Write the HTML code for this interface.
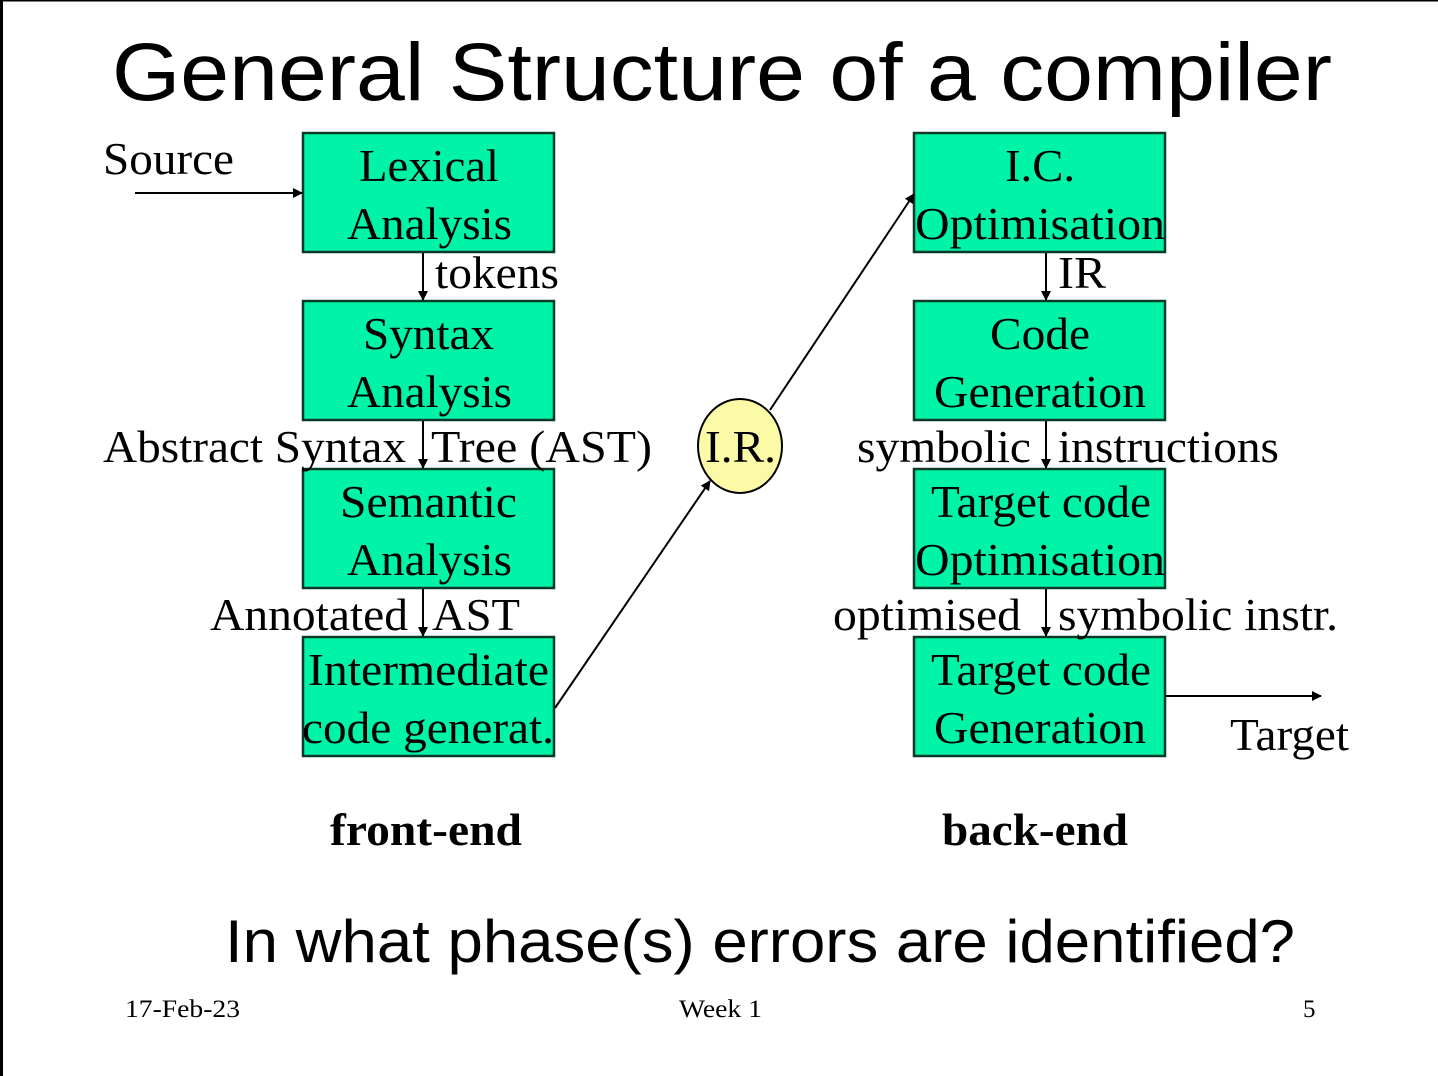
<!DOCTYPE html>
<html><head><meta charset="utf-8"><style>
html,body{margin:0;padding:0;background:#fff;}
svg{display:block;}
.s{font-family:"Liberation Serif",serif;font-size:46px;fill:#000;}
.a{font-family:"Liberation Sans",sans-serif;fill:#000;}
.b{fill:#00F4A8;stroke:#0b3a2a;stroke-width:2.5;}
</style></head><body>
<svg width="1438" height="1076" viewBox="0 0 1438 1076" xmlns="http://www.w3.org/2000/svg">
<defs><marker id="m" markerWidth="10" markerHeight="10" refX="9" refY="5" orient="auto" markerUnits="userSpaceOnUse"><path d="M0,0 L10,5 L0,10 z" fill="#000"/></marker></defs>
<rect x="0" y="0" width="1438" height="1076" fill="#fff"/>
<rect x="0" y="0" width="3" height="1076" fill="#000"/>
<rect x="0" y="0" width="1438" height="1.5" fill="#000"/>
<text class="a" x="112" y="100" font-size="82" textLength="1220" lengthAdjust="spacingAndGlyphs">General Structure of a compiler</text>

<g class="b">
<rect x="303" y="133" width="251" height="119"/>
<rect x="303" y="301" width="251" height="119"/>
<rect x="303" y="469" width="251" height="119"/>
<rect x="303" y="637" width="251" height="119"/>
<rect x="914" y="133" width="251" height="119"/>
<rect x="914" y="301" width="251" height="119"/>
<rect x="914" y="469" width="251" height="119"/>
<rect x="914" y="637" width="251" height="119"/>
</g>
<g class="s" lengthAdjust="spacingAndGlyphs">
<text x="359" y="181" textLength="140" lengthAdjust="spacingAndGlyphs">Lexical</text>
<text x="347" y="239" textLength="165" lengthAdjust="spacingAndGlyphs">Analysis</text>
<text x="363" y="349" textLength="131" lengthAdjust="spacingAndGlyphs">Syntax</text>
<text x="347" y="407" textLength="165" lengthAdjust="spacingAndGlyphs">Analysis</text>
<text x="340" y="517" textLength="177" lengthAdjust="spacingAndGlyphs">Semantic</text>
<text x="347" y="575" textLength="165" lengthAdjust="spacingAndGlyphs">Analysis</text>
<text x="308" y="685" textLength="241" lengthAdjust="spacingAndGlyphs">Intermediate</text>
<text x="302" y="743" textLength="252" lengthAdjust="spacingAndGlyphs">code generat.</text>
<text x="1005" y="181" textLength="70" lengthAdjust="spacingAndGlyphs">I.C.</text>
<text x="915" y="239" textLength="250" lengthAdjust="spacingAndGlyphs">Optimisation</text>
<text x="990" y="349" textLength="100" lengthAdjust="spacingAndGlyphs">Code</text>
<text x="934" y="407" textLength="212" lengthAdjust="spacingAndGlyphs">Generation</text>
<text x="931" y="517" textLength="220" lengthAdjust="spacingAndGlyphs">Target code</text>
<text x="915" y="575" textLength="250" lengthAdjust="spacingAndGlyphs">Optimisation</text>
<text x="931" y="685" textLength="220" lengthAdjust="spacingAndGlyphs">Target code</text>
<text x="934" y="743" textLength="212" lengthAdjust="spacingAndGlyphs">Generation</text>
</g>
<g stroke="#000" stroke-width="2" marker-end="url(#m)">
<line x1="135" y1="193" x2="302" y2="193"/>
<line x1="423" y1="253" x2="423" y2="300"/>
<line x1="423" y1="421" x2="423" y2="468"/>
<line x1="423" y1="589" x2="423" y2="636"/>
<line x1="1046" y1="253" x2="1046" y2="300"/>
<line x1="1046" y1="421" x2="1046" y2="468"/>
<line x1="1046" y1="589" x2="1046" y2="636"/>
<line x1="555" y1="708" x2="710" y2="481"/>
<line x1="770" y1="410" x2="914" y2="194"/>
<line x1="1166" y1="696" x2="1321" y2="696"/>
</g>
<ellipse cx="740" cy="446" rx="42" ry="47" fill="#fbfaa6" stroke="#000" stroke-width="2"/>
<g class="s">
<text x="705" y="462" textLength="71" lengthAdjust="spacingAndGlyphs">I.R.</text>
<text x="103" y="174" textLength="131" lengthAdjust="spacingAndGlyphs">Source</text>
<text x="435" y="288" textLength="124" lengthAdjust="spacingAndGlyphs">tokens</text>
<text x="1058" y="288" textLength="48" lengthAdjust="spacingAndGlyphs">IR</text>
<text x="103" y="462" textLength="303" lengthAdjust="spacingAndGlyphs">Abstract Syntax</text>
<text x="431" y="462" textLength="221" lengthAdjust="spacingAndGlyphs">Tree (AST)</text>
<text x="857" y="462" textLength="174" lengthAdjust="spacingAndGlyphs">symbolic</text>
<text x="1058" y="462" textLength="221" lengthAdjust="spacingAndGlyphs">instructions</text>
<text x="210" y="630" textLength="198" lengthAdjust="spacingAndGlyphs">Annotated</text>
<text x="432" y="630" textLength="88" lengthAdjust="spacingAndGlyphs">AST</text>
<text x="833" y="630" textLength="188" lengthAdjust="spacingAndGlyphs">optimised</text>
<text x="1058" y="630" textLength="280" lengthAdjust="spacingAndGlyphs">symbolic instr.</text>
<text x="1230" y="750" textLength="119" lengthAdjust="spacingAndGlyphs">Target</text>
<text x="330" y="845" font-weight="bold" textLength="192" lengthAdjust="spacingAndGlyphs">front-end</text>
<text x="942" y="845" font-weight="bold" textLength="186" lengthAdjust="spacingAndGlyphs">back-end</text>
</g>
<text class="a" x="225" y="962" font-size="60" textLength="1070" lengthAdjust="spacingAndGlyphs">In what phase(s) errors are identified?</text>
<g class="s" style="font-size:25px">
<text x="125" y="1017" textLength="115" lengthAdjust="spacingAndGlyphs">17-Feb-23</text>
<text x="679" y="1017" textLength="83" lengthAdjust="spacingAndGlyphs">Week 1</text>
<text x="1303" y="1017">5</text>
</g>
</svg>
</body></html>
